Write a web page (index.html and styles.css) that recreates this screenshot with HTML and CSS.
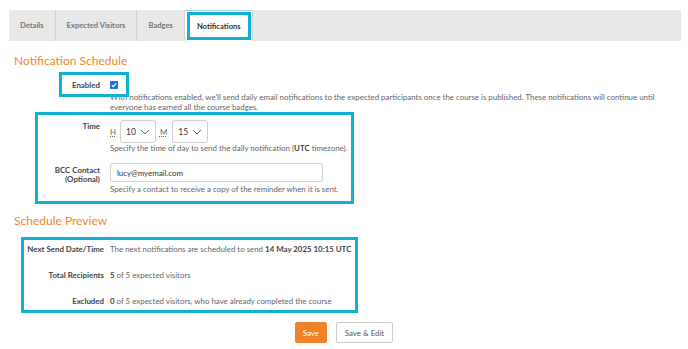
FILE: index.html
```html
<!DOCTYPE html>
<html lang="en">
<head>
<meta charset="utf-8">
<title>Notifications</title>
<link rel="stylesheet" href="styles.css">
</head>
<body>
<nav class="tabs">
  <a class="tab">Details</a>
  <a class="tab">Expected Visitors</a>
  <a class="tab">Badges</a>
  <a class="tab tab-active"><span class="hl-tab">Notifications</span></a>
</nav>

<h2 class="heading">Notification Schedule</h2>

<div class="form">
  <div class="row row-enabled">
    <span class="hl-enabled"></span>
    <label class="lbl">Enabled</label>
    <div class="field">
      <span class="checkbox"><svg viewBox="0 0 8 8" width="8" height="8"><path d="M1.8 4.2 L3.4 5.7 L6.3 2.4" fill="none" stroke="#fff" stroke-width="1.2"/></svg></span>
      <p class="help desc">With notifications enabled, we'll send daily email notifications to the expected participants once the course is published. These notifications will continue until everyone has earned all the course badges.</p>
    </div>
  </div>

  <div class="hl-box box-time">
    <div class="row row-time">
      <label class="lbl">Time</label>
      <div class="field">
        <div class="time-inputs">
          <abbr class="unit">H</abbr>
          <span class="select">10<svg class="chev" viewBox="0 0 10 6" width="10" height="6"><path d="M1 1 L5 5 L9 1" fill="none" stroke="#666" stroke-width="1"/></svg></span>
          <abbr class="unit unit-m">M</abbr>
          <span class="select">15<svg class="chev" viewBox="0 0 10 6" width="10" height="6"><path d="M1 1 L5 5 L9 1" fill="none" stroke="#666" stroke-width="1"/></svg></span>
        </div>
        <p class="help">Specify the time of day to send the daily notification (<b>UTC</b> timezone).</p>
      </div>
    </div>
    <div class="row row-bcc">
      <label class="lbl lbl-two">BCC Contact<br>(Optional)</label>
      <div class="field">
        <span class="input">lucy@myemail.com</span>
        <p class="help">Specify a contact to receive a copy of the reminder when it is sent.</p>
      </div>
    </div>
  </div>
</div>

<h2 class="heading heading-2">Schedule Preview</h2>

<div class="hl-box box-preview">
  <div class="prow">
    <span class="plbl">Next Send Date/Time</span>
    <span class="pval">The next notifications are scheduled to send <b>14 May 2025 10:15 UTC</b></span>
  </div>
  <div class="prow">
    <span class="plbl">Total Recipients</span>
    <span class="pval"><b>5</b> of 5 expected visitors</span>
  </div>
  <div class="prow">
    <span class="plbl">Excluded</span>
    <span class="pval"><b>0</b> of 5 expected visitors, who have already completed the course</span>
  </div>
</div>

<div class="actions">
  <button class="btn btn-primary">Save</button>
  <button class="btn btn-default">Save &amp; Edit</button>
</div>
</body>
</html>
```

FILE: styles.css
```css
* { box-sizing: border-box; }
body {
  margin: 0;
  padding-top: 10px;
  font-family: Lato, "Liberation Sans", sans-serif;
  font-size: 7.9px;
  color: #666;
  background: #fff;
}
.tabs {
  display: flex;
  margin: 0 7px 0 9px;
  height: 31px;
  background: #e8e8e8;
}
.tab {
  display: block;
  flex: none;
  padding: 0 11px;
  line-height: 31px;
  font-size: 7.6px;
  font-weight: 700;
  color: #777;
  border-right: 1px solid #d2d2d2;
}
.tab-active {
  background: #fff;
  border-top: 1px solid #a8d4ee;
  padding: 1px 1px 1px 2px;
  line-height: normal;
}
.hl-tab {
  display: flex;
  align-items: center;
  height: 28px;
  padding: 0 7px;
  border: 3px solid #0fb0d2;
  color: #333;
}
.heading {
  margin: 13px 0 0 14px;
  font-size: 12px;
  line-height: 14px;
  font-weight: 400;
  color: #f0872e;
}
.heading-2 { margin-top: 10px; }
.form { margin-top: 4px; }
.row {
  display: grid;
  grid-template-columns: 100px 1fr;
  column-gap: 10px;
}
.lbl {
  text-align: right;
  font-weight: 700;
  color: #444;
  line-height: 10px;
}
.row-enabled { position: relative; }
.row-enabled .lbl { padding-top: 8px; }
.hl-enabled {
  position: absolute;
  left: 59px;
  top: 0;
  width: 70px;
  height: 25px;
  border: 3px solid #0fb0d2;
  z-index: 2;
}
.checkbox {
  display: flex;
  align-items: center;
  justify-content: center;
  width: 8px;
  height: 8px;
  margin-top: 9px;
  background: #1f6fe0;
  border-radius: 1px;
}
.help {
  margin: 0;
  line-height: 10px;
  color: #666;
}
.help b { color: #444; }
.desc { margin-top: 3px; }
.hl-box { border: 3px solid #0fb0d2; }
.box-time {
  margin: 0 0 0 35px;
  width: 319px;
  padding: 5px 0 7px;
}
.box-time .row { grid-template-columns: 62px 1fr; }
.row-time .lbl { padding-top: 1px; }
.time-inputs {
  display: flex;
  align-items: center;
  height: 23px;
}
.unit {
  text-decoration: underline dotted;
  color: #666;
  margin-right: 4px;
}
.unit-m { margin-left: 4px; margin-right: 5px; }
.select {
  display: flex;
  align-items: center;
  gap: 4px;
  height: 23px;
  padding: 0 5px;
  border: 1px solid #d0d0d0;
  border-radius: 3px;
  color: #333;
  font-size: 8.5px;
}
.chev { display: block; }
.row-bcc { margin-top: 10px; }
.lbl-two { line-height: 9px; padding-top: 3px; }
.input {
  display: flex;
  align-items: center;
  width: 213px;
  height: 19px;
  padding: 0 6px;
  border: 1px solid #d0d0d0;
  border-radius: 3px;
  color: #333;
}
.row-bcc .help { margin-top: 2px; }
.box-preview {
  margin: 9px 0 0 21px;
  width: 337px;
  padding: 4px 0;
  display: flex;
  flex-direction: column;
  gap: 16px;
}
.prow {
  display: grid;
  grid-template-columns: 80px 1fr;
  column-gap: 6px;
  line-height: 10px;
}
.plbl {
  text-align: right;
  font-weight: 700;
  color: #444;
}
.pval { color: #666; white-space: nowrap; }
.pval b { color: #444; }
.actions {
  display: flex;
  justify-content: center;
  gap: 9px;
  margin-top: 9px;
}
.btn {
  font-family: inherit;
  font-size: 7.9px;
  height: 21px;
  border-radius: 2px;
  padding: 0 8px;
  cursor: pointer;
}
.btn-primary {
  background: #f0822a;
  border: 1px solid #f0822a;
  color: #fff;
  width: 32px;
  padding: 0;
}
.btn-default {
  background: #fff;
  border: 1px solid #ccc;
  color: #555;
}
```
